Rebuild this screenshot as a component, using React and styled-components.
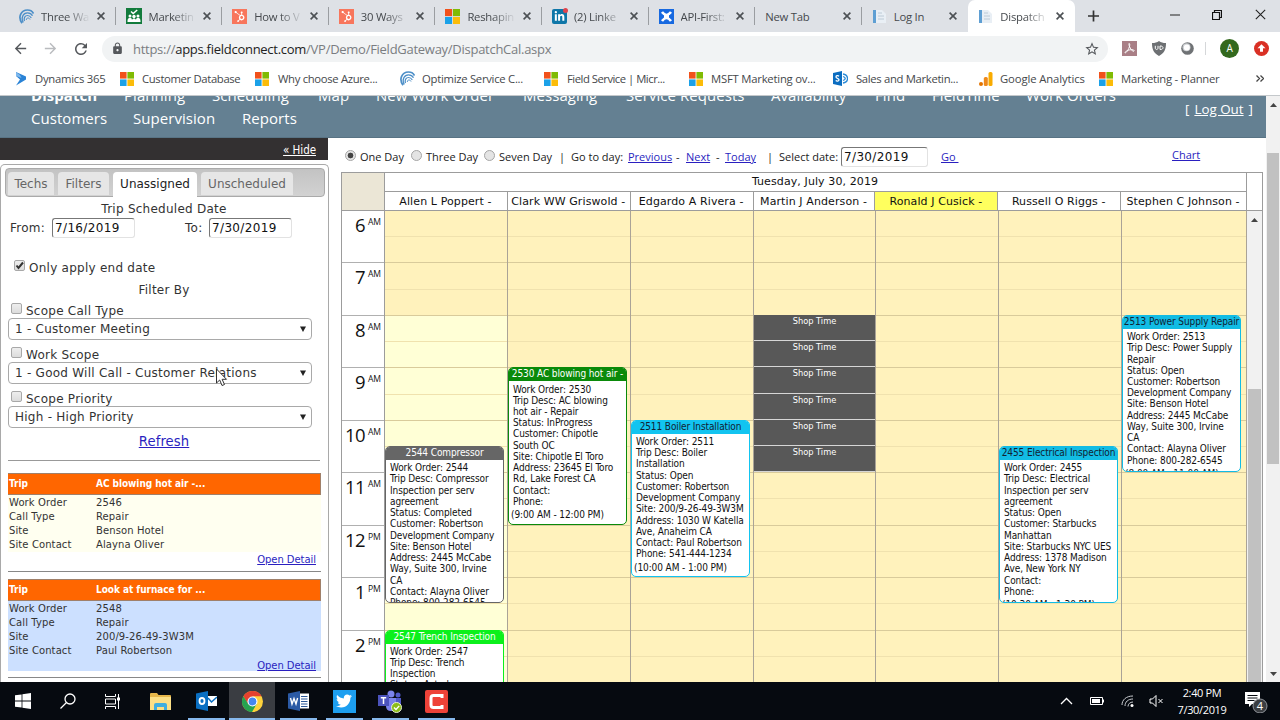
import styled, { createGlobalStyle } from "styled-components";
import { FaHubspot, FaLinkedinIn, FaTwitter } from "react-icons/fa";
import {
  MdArrowBack,
  MdArrowForward,
  MdLock,
  MdRefresh,
  MdStarBorder,
} from "react-icons/md";

const segoe = `"Open Sans", "Noto Sans", sans-serif`;
const verdana = `"DejaVu Sans", sans-serif`;
const tahoma = `"DejaVu Sans Condensed", "DejaVu Sans", sans-serif`;

const HOUR = 52.45;
const FIRST_HOUR = 6;

const GlobalStyle = createGlobalStyle`
  * {
    box-sizing: border-box;
  }
  body {
    margin: 0;
    overflow: hidden;
    background: #fff;
  }
  a {
    color: #2a1fc0;
    text-decoration: underline;
  }
  svg {
    display: block;
    flex: none;
  }
`;

const Screen = styled.div`
  position: relative;
  display: flex;
  flex-direction: column;
  width: 1280px;
  height: 720px;
  overflow: hidden;
  font-family: ${segoe};
  color: #222;
  white-space: nowrap;
`;

/* ---------- browser ---------- */

const TabStrip = styled.div`
  display: flex;
  height: 32px;
  flex: none;
  padding-left: 9px;
  background: #dee1e6;
`;

const BrowserTab = styled.div`
  display: flex;
  align-items: center;
  width: 106.6px;
  padding-left: 10px;
  font-size: 11.3px;
  letter-spacing: -0.25px;
  color: #45494d;
  border-radius: 7px 7px 0 0;
  background: ${(p) => (p.$active ? "#fff" : "transparent")};
  & > svg {
    margin-right: 7px;
  }
`;

const TabTitle = styled.span`
  flex: 1;
  margin-right: 6px;
  mask-image: ${(p) =>
    p.$fade ? "linear-gradient(90deg, #000 50%, transparent 98%)" : "none"};
`;

const TabClose = styled.span`
  display: flex;
  align-items: center;
  width: 19px;
  height: 18px;
  border-right: 1px solid ${(p) => (p.$line ? "#9a9da1" : "transparent")};
`;

const NewTabButton = styled.svg`
  margin: 4px 0 0 13px;
`;

const WindowButtons = styled.div`
  display: flex;
  flex: 1;
  align-items: center;
  justify-content: space-between;
  padding: 0 14px 3px 71px;
`;

const AddressRow = styled.div`
  display: flex;
  align-items: center;
  height: 33px;
  flex: none;
  padding: 0 11px 0 12px;
  color: #55585c;
`;

const NavIcons = styled.div`
  display: flex;
  align-items: center;
  gap: 13px;
  width: 90px;
  & > svg:nth-child(2) {
    color: #b9bbbe;
  }
`;

const UrlBar = styled.div`
  display: flex;
  align-items: center;
  width: 1006px;
  height: 26px;
  padding: 0 8px 0 9px;
  border-radius: 13px;
  background: #f1f3f4;
`;

const Url = styled.span`
  flex: 1;
  margin-left: 9px;
  font-size: 13px;
  letter-spacing: -0.27px;
  color: #7a7d81;
  & b {
    font-weight: 400;
    color: #222;
  }
`;

const Extensions = styled.div`
  display: flex;
  flex: 1;
  align-items: center;
  justify-content: space-between;
  margin-left: 14px;
`;

const BookmarkBar = styled.div`
  display: flex;
  align-items: center;
  height: 31px;
  flex: none;
  padding: 0 0 3px 14px;
  border-bottom: 1px solid #c4c8cb;
`;

const Bookmark = styled.div`
  display: flex;
  align-items: center;
  width: ${(p) => p.$w}px;
  gap: ${(p) => p.$gap || 8}px;
  font-size: 11.3px;
  letter-spacing: ${(p) => p.$ls || 0}px;
  color: #45484b;
`;

/* ---------- site header ---------- */

const Viewport = styled.div`
  display: flex;
  height: 586px;
  flex: none;
`;

const Page = styled.div`
  width: 1266px;
`;

const SiteHeader = styled.div`
  display: flex;
  height: 42px;
  overflow: hidden;
  padding-left: 31px;
  background: #648092;
  border-bottom: 1px solid #587384;
  color: #fff;
`;

const SiteNav = styled.nav`
  width: 1154px;
  margin-top: -12px;
  font-size: 15px;
  letter-spacing: 0.05px;
  line-height: 23px;
`;

const NavRow = styled.div`
  display: flex;
`;

const NavItem = styled.span`
  width: ${(p) => p.$w}px;
  font-weight: ${(p) => (p.$current ? 700 : 400)};
`;

const LogOut = styled.div`
  display: flex;
  gap: 5px;
  margin-top: 4px;
  font-size: 13.4px;
  line-height: 18px;
  & a {
    color: #fff;
  }
`;

const Content = styled.div`
  display: flex;
  height: 544px;
`;

/* ---------- left panel ---------- */

const Sidebar = styled.aside`
  display: flex;
  flex-direction: column;
  width: 329px;
  font-family: ${verdana};
  font-size: 12px;
  letter-spacing: 0.25px;
  color: #333;
`;

const HideBar = styled.div`
  height: 22px;
  flex: none;
  width: 328px;
  padding-right: 12px;
  background: #333031;
  font-family: ${tahoma};
  font-size: 11.5px;
  letter-spacing: -0.05px;
  line-height: 24px;
  text-align: right;
  & a {
    color: #fff;
  }
`;

const Panel = styled.div`
  flex: 1;
  margin-top: 4px;
  padding: 3px 3px 0 4px;
  border: 1px solid #a9a9a9;
  border-bottom: 0;
  border-radius: 5px 5px 0 0;
  overflow: hidden;
`;

const PanelTabs = styled.div`
  display: flex;
  align-items: flex-end;
  gap: 4px;
  height: 29px;
  padding-left: 2px;
  border: 1px solid #aaa;
  border-radius: 4px;
  background: linear-gradient(#c3c3c3, #d2d2d2);
  letter-spacing: 0;
`;

const PanelTab = styled.div`
  width: ${(p) => p.$w}px;
  height: ${(p) => (p.$active ? 25 : 23)}px;
  margin-bottom: ${(p) => (p.$active ? -1 : 1)}px;
  border-radius: 4px 4px 0 0;
  background: ${(p) => (p.$active ? "#fff" : "#e6e6e6")};
  color: ${(p) => (p.$active ? "#222" : "#666")};
  line-height: 24px;
  text-align: center;
`;

const PanelHeading = styled.div`
  height: ${(p) => p.$h}px;
  padding-right: 2px;
  line-height: 24px;
  text-align: center;
`;

const DateRow = styled.div`
  display: flex;
  align-items: center;
  height: 20px;
  padding-left: 5px;
`;

const DateLabel = styled.span`
  width: ${(p) => p.$w}px;
  margin-left: ${(p) => p.$left || 0}px;
`;

const DateInput = styled.span`
  width: ${(p) => p.$w || 83}px;
  height: 20px;
  padding-left: 2px;
  border: 1px solid #e2e2e2;
  border-top: 1px solid #777;
  border-left: 1px solid #777;
  border-radius: 3px;
  background: #fff;
  font-family: ${verdana};
  font-size: 12px;
  letter-spacing: 0.35px;
  line-height: 18px;
  color: #111;
`;

const CheckRow = styled.div`
  display: flex;
  gap: 4px;
  height: ${(p) => p.$h || 15}px;
  margin-top: ${(p) => p.$top || 0}px;
  padding-left: ${(p) => p.$left || 6}px;
  line-height: 16px;
`;

const Box = styled.span`
  width: 11px;
  height: 11px;
  border: 1px solid #a8a8a8;
  border-radius: 2px;
  background: linear-gradient(#eee, #dcdcdc);
`;

const Select = styled.div`
  display: flex;
  align-items: center;
  justify-content: space-between;
  width: 304px;
  height: 22px;
  margin: 0 0 7px 3px;
  padding: 0 5px 0 6px;
  border: 1px solid #a9a9a9;
  border-radius: 4px;
`;

const RefreshRow = styled.div`
  height: 32px;
  margin: -6px 5px 0 3px;
  border-bottom: 1px solid #999;
  font-size: 13.2px;
  letter-spacing: 0.1px;
  line-height: 26px;
  text-align: center;
`;

const Trip = styled.div`
  margin: ${(p) => (p.$first ? 12 : 7)}px 4px 0 3px;
  border-bottom: 1px solid #888;
  font-size: 10px;
  letter-spacing: 0.1px;
`;

const TripHeader = styled.div`
  display: grid;
  grid-template-columns: 87px 1fr;
  height: 22px;
  padding-left: 1px;
  border: 1px solid #a0806a;
  border-left: 0;
  background: #ff6600;
  color: #fff;
  font-family: ${tahoma};
  font-weight: 700;
  font-size: 10px;
  line-height: 20px;
  letter-spacing: -0.05px;
`;

const TripBody = styled.dl`
  display: grid;
  grid-template-columns: 87px 1fr;
  grid-auto-rows: 14px;
  margin: 0;
  padding: 1px 0 0 1px;
  background: ${(p) => p.$bg};
  line-height: 14px;
  & dd {
    margin: 0;
  }
`;

const TripFooter = styled.div`
  height: 13px;
  margin-bottom: 6px;
  padding-right: 5px;
  background: ${(p) => p.$bg};
  letter-spacing: -0.05px;
  line-height: 15px;
  text-align: right;
`;

/* ---------- dispatch calendar ---------- */

const Dispatch = styled.main`
  width: 937px;
  padding-left: 12px;
`;

const DayToolbar = styled.div`
  display: flex;
  align-items: center;
  height: 34px;
  padding: 3px 0 0 4px;
  font-size: 11px;
`;

const ToolItem = styled.span`
  width: ${(p) => p.$w}px;
  margin-left: ${(p) => p.$left || 0}px;
  padding-bottom: ${(p) => p.$raise || 0}px;
`;

const Radio = styled.span`
  width: 11px;
  height: 11px;
  margin: 0 4px 3px 0;
  border: 1px solid #a5a5a5;
  border-radius: 50%;
  background: ${(p) =>
    p.$on ? "radial-gradient(#444 0 2.6px, #e6e6e6 3.2px)" : "#e4e4e4"};
`;

const Calendar = styled.div`
  width: 922px;
  border: 1px solid #9c9c9c;
  border-bottom: 0;
`;

const CalendarHead = styled.div`
  display: flex;
  height: 38px;
  border-bottom: 1px solid #9c9c9c;
  font-family: ${verdana};
  font-size: 11px;
  letter-spacing: 0.1px;
  color: #111;
`;

const Corner = styled.div`
  width: 43px;
  background: #ebe6d6;
  border-right: 1px solid #9c9c9c;
`;

const HeadRows = styled.div`
  width: 862px;
  border-right: 1px solid #9c9c9c;
`;

const DateHead = styled.div`
  height: 19px;
  padding-right: 1px;
  border-bottom: 1px solid #9c9c9c;
  line-height: 18px;
  text-align: center;
`;

const TechNames = styled.div`
  display: flex;
`;

const TechName = styled.div`
  width: ${(p) => p.$w}px;
  height: 18px;
  padding-right: 1px;
  border-right: 1px solid #9c9c9c;
  background: ${(p) => (p.$marked ? "#ffff5e" : "#fff")};
  line-height: 19px;
  text-align: center;
  &:last-child {
    border-right: 0;
  }
`;

const CalendarBody = styled.div`
  display: flex;
  height: 471px;
  overflow: hidden;
`;

const Hours = styled.div`
  width: 43px;
  border-right: 1px solid #9c9c9c;
`;

const HourCell = styled.div`
  display: flex;
  justify-content: flex-end;
  height: ${HOUR}px;
  padding: 1px 2px 0 0;
  border-bottom: 1px solid #b0b0b0;
  font-size: 18.5px;
  letter-spacing: -0.6px;
  line-height: 25px;
  color: #111;
  & sup {
    width: 14px;
    margin-left: 3px;
    font-size: 8.6px;
    letter-spacing: -0.2px;
    line-height: 20px;
  }
`;

const TechColumn = styled.div`
  position: relative;
  width: ${(p) => p.$w}px;
  height: 471px;
  border-right: 1px solid #aaa397;
  background: repeating-linear-gradient(
      transparent 0 ${HOUR / 2 - 1}px,
      #f0e2ae ${HOUR / 2 - 1}px ${HOUR / 2}px,
      transparent ${HOUR / 2}px ${HOUR - 1}px,
      #d9cb9b ${HOUR - 1}px ${HOUR}px
    ),
    ${(p) =>
      p.$open
        ? `linear-gradient(#fff2bc ${HOUR * 2}px, #ffffd6 ${HOUR * 2}px)`
        : "#fff2bc"};
  &:last-of-type {
    border-right: 0;
  }
`;

const ShopBlock = styled.div`
  position: absolute;
  left: 0;
  right: 0;
  height: ${HOUR / 2}px;
  background: #585858;
  border-bottom: 1px solid #d6d6d6;
  color: #fff;
  font-family: ${tahoma};
  font-size: 9.2px;
  line-height: 12px;
  text-align: center;
`;

const Event = styled.div`
  position: absolute;
  left: 0;
  width: 119px;
  overflow: hidden;
  border: 1px solid ${(p) => p.$color};
  border-radius: 5px;
  background: #fff;
  font-family: ${tahoma};
  font-size: 10px;
  letter-spacing: -0.1px;
  color: #111;
`;

const EventTitle = styled.div`
  height: 13px;
  background: ${(p) => p.$color};
  color: ${(p) => (p.$dark ? "#123" : "#fff")};
  font-size: 10px;
  letter-spacing: -0.11px;
  line-height: 12px;
  text-align: center;
`;

const EventLines = styled.div`
  padding: 2.2px 0 0 4px;
  line-height: 11.23px;
`;

const EventTime = styled.div`
  margin-top: 2px;
  padding-left: 2px;
  line-height: 11px;
`;

const InnerScroll = styled.div`
  display: flex;
  flex-direction: column;
  align-items: center;
  width: 15px;
  padding: 7px 1px 0;
  background: #f1f1f1;
  &::after {
    content: "";
    width: 13px;
    flex: 1;
    margin-top: 167px;
    background: #c1c1c1;
  }
`;

const PageScroll = styled.div`
  display: flex;
  flex-direction: column;
  justify-content: space-between;
  align-items: center;
  width: 14px;
  padding: 7px 0 6px;
  background: #f1f1f1;
`;

const PageThumb = styled.div`
  width: 12px;
  height: 311px;
  margin-bottom: 163px;
  background: #c1c1c1;
`;

/* ---------- taskbar ---------- */

const Taskbar = styled.footer`
  display: flex;
  height: 38px;
  flex: none;
  background: #060a10;
  color: #fff;
`;

const TaskSlot = styled.div`
  display: flex;
  align-items: center;
  justify-content: center;
  width: ${(p) => p.$w || 46}px;
  margin-left: ${(p) => p.$left || 0}px;
  background: ${(p) => (p.$active ? "#3a3d42" : "transparent")};
  box-shadow: ${(p) => (p.$active ? "inset 0 -2px #86b8ec" : "none")};
`;

const OpenSlot = styled(TaskSlot)`
  background: linear-gradient(#86b8ec, #86b8ec) 5px 100% / 37px 2px no-repeat;
`;

const Tray = styled.div`
  display: flex;
  align-items: center;
  margin-left: auto;
  padding-right: 12px;
`;

const Clock = styled.div`
  width: 62px;
  margin: 0 11px 0 7px;
  font-size: 11px;
  letter-spacing: -0.35px;
  line-height: 17px;
  text-align: center;
`;

const Cursor = styled.svg`
  position: absolute;
  left: 215px;
  top: 368px;
`;

/* ---------- icons ---------- */

const WindowsLogo = ({ size = 14 }) => (
  <svg width={size} height={size} viewBox="0 0 14 14">
    <path fill="#f1511b" d="M0 0h6.6v6.6H0z" />
    <path fill="#80bb03" d="M7.4 0H14v6.6H7.4z" />
    <path fill="#1ba1e8" d="M0 7.4h6.6V14H0z" />
    <path fill="#fbbc09" d="M7.4 7.4H14V14H7.4z" />
  </svg>
);

const Ripple = () => (
  <svg width="15" height="15" viewBox="0 0 15 15" fill="none" stroke="#4d8fc8">
    <path d="M3 14.300C-1.500 8 2 1 8.500 1c3 0 5 1.500 6 3.500" strokeWidth="1.700" />
    <path d="M4.200 13.500C1.500 8.500 4.500 3.800 8.500 3.800c2.500 0 4 1.200 5 3" strokeWidth="1.300" />
    <path d="M5.500 12C4.500 9 6 6.500 8.500 6.500c1.800 0 3 1 3.800 2.500" strokeWidth="1.200" />
    <path d="M7.500 11C7 9.800 8 9 9 9s1.500.6 2 1.500" />
  </svg>
);

const MarketingIcon = () => (
  <svg width="16" height="16" viewBox="0 0 16 16" fill="#fff">
    <path fill="#127b3c" d="M0 0h16v16H0z" />
    <path d="m5 3.500 2.200 2 4-3.500" fill="none" stroke="#fff" strokeWidth="1.500" />
    <circle cx="4" cy="8" r="1.500" />
    <circle cx="8" cy="8.500" r="1.700" />
    <circle cx="12" cy="8" r="1.500" />
    <path d="M1.500 13c0-4 4.500-4 4.500-1 .5-2 3.500-2 4 0 0-3 4.500-3 4.500 1v1h-13z" />
  </svg>
);

const Tile = styled.span`
  position: relative;
  display: flex;
  align-items: center;
  justify-content: center;
  width: ${(p) => p.$size || 15}px;
  height: ${(p) => p.$size || 15}px;
  flex: none;
  margin-right: ${(p) => p.$gap ?? 7}px;
  border-radius: ${(p) => p.$round || 0}px;
  background: ${(p) => p.$bg};
  color: #fff;
`;

const RedDot = styled.i`
  position: absolute;
  top: -1px;
  right: -1px;
  width: 5px;
  height: 5px;
  border-radius: 50%;
  background: #e0444c;
`;

const HubspotTile = () => (
  <Tile $bg="#f8765c">
    <FaHubspot size={11} />
  </Tile>
);

const LinkedinTile = () => (
  <Tile $bg="#0e76a8" $round={2}>
    <FaLinkedinIn size={11} />
    <RedDot />
  </Tile>
);

const CrossIcon = () => (
  <svg width="15" height="15" viewBox="0 0 15 15">
    <path fill="#1769e0" d="M0 0h15v15H0z" />
    <path
      d="M3 3c1.500 2 3 3 4.500 3S10.500 5 12 3M3 12c1.500-2 3-3 4.500-3s3 1 4.500 3"
      fill="none"
      stroke="#fff"
      strokeWidth="2.600"
    />
    <path fill="#fff" d="M5 5h5v5H5z" />
  </svg>
);

const PageIcon = () => (
  <svg width="15" height="15" viewBox="0 0 15 15">
    <path fill="#e9eff5" d="M1 1h9l4 4v9H1z" />
    <path fill="#5f9fd3" d="M1 1h3v13H1z" />
    <path d="M6 4h4M6 7h6M6 10h6" stroke="#bccad6" />
  </svg>
);

const CloseX = ({ size = 8, color = "#4c5054", width = 1.6 }) => (
  <svg width={size} height={size} viewBox="0 0 8 8" fill="none">
    <path d="m.6.6 6.800 6.800M7.400.6.6 7.400" stroke={color} strokeWidth={width} />
  </svg>
);

const DynamicsIcon = () => (
  <svg width="13" height="15" viewBox="0 0 13 15">
    <path fill="#2a83d6" d="m2 1 10 4.500v3L2 14.500l4-6L2 5z" />
    <path fill="#7fb8ec" d="m2 1 4 3 1.500 3L2 5z" />
  </svg>
);

const SharepointIcon = () => (
  <svg width="15" height="15" viewBox="0 0 15 15">
    <path fill="#0a6cc0" d="m0 2 9-2v15l-9-2z" />
    <path
      d="M6 5.200C5 4.300 3 4.500 3 5.900c0 1.600 3 1.200 3 2.900 0 1.500-2.200 1.600-3.300.7"
      fill="none"
      stroke="#fff"
      strokeWidth="1.300"
    />
    <path
      d="M10 3c3 .5 4.500 2.500 4.500 4.500S13 11.500 10 12M10 5.500c3 1 3 3 0 4"
      fill="none"
      stroke="#2a8ad6"
      strokeWidth="1.300"
    />
  </svg>
);

const AnalyticsIcon = () => (
  <svg width="14" height="14" viewBox="0 0 14 14">
    <rect x="9.500" y="0" width="4" height="14" rx="1.500" fill="#f9ab00" />
    <rect x="4.800" y="5" width="4" height="9" rx="1.500" fill="#ee8a1d" />
    <circle cx="2" cy="12" r="2" fill="#e37400" />
  </svg>
);

const AcrobatIcon = () => (
  <svg width="15" height="15" viewBox="0 0 15 15" fill="none" stroke="#fff">
    <path fill="#a97f86" stroke="none" d="M0 0h15v15H0z" />
    <path d="M7 2.500c1.500 0 .5 4-1 6.500S3 12.500 3 11.500 7 8.500 10 8.700s2.500 2 1 1.500S6.500 5 7 2.500z" />
  </svg>
);

const ShieldIcon = () => (
  <svg width="14" height="15" viewBox="0 0 14 15">
    <path fill="#6d7073" d="M7 0c2 1.500 4 2 7 2 0 6-1.500 10-7 13C1.500 12 0 8 0 2c3 0 5-.5 7-2z" />
    <path
      d="M3.300 4.800V7c0 2 2.700 2 2.700 0V4.800M8 5v3.500c4 .3 4-3.800 0-3.500z"
      fill="none"
      stroke="#fff"
    />
  </svg>
);

const GlobeIcon = () => (
  <svg width="13" height="13" viewBox="0 0 13 13">
    <circle cx="6.500" cy="6.500" r="6.300" fill="#6f7275" />
    <circle cx="5.500" cy="5.300" r="4" fill="#c9cccf" />
    <circle cx="5.800" cy="5.600" r="3" fill="#fff" />
  </svg>
);

const AlertIcon = () => (
  <svg width="15" height="15" viewBox="0 0 15 15">
    <circle cx="7.500" cy="7.500" r="7.500" fill="#d93025" />
    <path fill="#fff" d="m7.500 3.200 4 4H9v3.600H6V7.200H3.500z" />
  </svg>
);

const Avatar = styled.span`
  width: 19px;
  height: 19px;
  border-radius: 50%;
  background: #33691e;
  color: #fff;
  font-size: 10px;
  line-height: 19px;
  text-align: center;
`;

const ToolbarRule = styled.span`
  width: 1px;
  height: 13px;
  margin: 0 -1px 0 -3px;
  background: #d5d7d9;
`;

const Arrow = ({ down }) => (
  <svg width="7" height="4" viewBox="0 0 7 4">
    <path fill="#444" d={down ? "M0 0h7L3.500 4z" : "M0 4h7L3.500 0z"} />
  </svg>
);

const SelectArrow = () => (
  <svg width="6" height="6" viewBox="0 0 6 6">
    <path fill="#222" d="M0 .5h6L3 6z" />
  </svg>
);

const StartIcon = () => (
  <svg width="16" height="16" viewBox="0 0 16 16" fill="#fff">
    <path d="m0 2.300 6.600-.9v6.200H0zM7.400 1.300 16 0v7.600H7.400zM0 8.400h6.600v6.200L0 13.700zM7.400 8.400H16V16l-8.600-1.300z" />
  </svg>
);

const SearchIcon = () => (
  <svg width="16" height="16" viewBox="0 0 16 16" fill="none" stroke="#fff" strokeWidth="1.300">
    <circle cx="10" cy="6" r="5" />
    <path d="M6.500 9.500.5 15.500" />
  </svg>
);

const TaskViewIcon = () => (
  <svg width="16" height="15" viewBox="0 0 16 15" fill="none" stroke="#fff">
    <path d="M.5 0v2.500h10V0M.5 5h10v5H.5zM.5 15v-2.500h10V15M13.500 0v15" />
    <path fill="#fff" stroke="none" d="M12 3.500h3v3h-3z" />
  </svg>
);

const FolderIcon = () => (
  <svg width="21" height="17" viewBox="0 0 21 17">
    <path fill="#e5b64a" d="M0 1q0-1 1-1h6l1.500 2H20q1 0 1 1v14H0z" />
    <path fill="#fbdf86" d="M0 4h21v13H0z" />
    <path fill="#3eaee0" d="M4 17v-5q0-2 2-2h9q2 0 2 2v5h-3v-3H7v3z" />
  </svg>
);

const OutlookIcon = () => (
  <svg width="21" height="20" viewBox="0 0 21 20">
    <path fill="#0a6fc2" d="m0 2.500 12-2.500v20L0 17.500z" />
    <path fill="#fff" d="M12 5h9v10h-9z" />
    <path d="m12 7 3.500 4L21 6" fill="none" stroke="#0a6fc2" strokeWidth="1.500" />
    <ellipse cx="6" cy="10" rx="2.500" ry="3" fill="none" stroke="#fff" strokeWidth="1.800" />
  </svg>
);

const ChromeIcon = () => (
  <svg width="21" height="21" viewBox="0 0 21 21">
    <circle cx="10.500" cy="10.500" r="10.500" fill="#fdd23c" />
    <path fill="#e5412f" d="M1.400 5.200A10.500 10.500 0 0 1 19.600 5.300H10.500v5.200L6 13z" />
    <path fill="#26a350" d="M1.400 5.200A10.500 10.500 0 0 0 10 21l5-8.500-4.500 2-4.500-2z" />
    <circle cx="10.500" cy="10.500" r="5" fill="#fff" />
    <circle cx="10.500" cy="10.500" r="3.900" fill="#4587f0" />
  </svg>
);

const WordIcon = () => (
  <svg width="21" height="20" viewBox="0 0 21 20">
    <path fill="#fff" d="M11 2.500h10v15H11z" />
    <path d="M13 5.500h6.500M13 8h6.500M13 10.500h6.500M13 13h6.500M13 15.500h6.500" stroke="#2b5797" />
    <path fill="#2b5aa5" d="m0 2.500 12-2.500v20L0 17.500z" />
    <path d="m2.500 7 1.500 6 2-5.500L8 13l1.600-6" fill="none" stroke="#fff" strokeWidth="1.400" />
  </svg>
);

const TeamsIcon = () => (
  <svg width="24" height="23" viewBox="0 0 24 23">
    <circle cx="13" cy="4" r="3.500" fill="#7b83eb" />
    <circle cx="20" cy="5" r="2.500" fill="#5059c9" />
    <path fill="#5059c9" d="M14 8h9v7q0 3-4 3h-5z" />
    <path fill="#7b83eb" d="M8 8h10v7q0 6-5 6t-5-5z" />
    <path fill="#4b53bc" d="M0 5h11v11H0z" />
    <path d="M2.800 7.800h5.400M5.500 8v6" stroke="#fff" strokeWidth="1.500" />
    <circle cx="18.500" cy="17.500" r="5" fill="#8cbd18" stroke="#e8f0d8" />
    <path d="m16 17.500 2 2 3.200-3.600" fill="none" stroke="#fff" strokeWidth="1.400" />
  </svg>
);

const CamtasiaIcon = () => (
  <svg width="23" height="23" viewBox="0 0 23 23">
    <rect width="23" height="23" rx="2" fill="#ee4238" />
    <path
      d="M17 8V5.500H8.500Q6 5.500 6 8v7q0 2.500 2.500 2.500H17V15"
      fill="none"
      stroke="#fff"
      strokeWidth="3"
    />
  </svg>
);

const TrayIcons = () => (
  <svg width="104" height="24" viewBox="0 0 104 24" fill="none" stroke="#fff">
    <path d="m1 15 5.500-5.500L12 15" strokeWidth="1.300" />
    <path d="M30.500 8.500h12v7h-12zM43.500 10.500v3" />
    <path fill="#fff" stroke="none" d="M32 10h8v4h-8z" />
    <path
      d="M62 16C62 11 66 7 73 7M65 17c0-4 3-7 8-7M68 17.500c0-2.500 2-4.500 5-4.500"
      stroke="#c9ccd0"
    />
    <circle cx="72" cy="16.500" r="1.500" fill="#fff" stroke="none" />
    <path d="M90 10h2.500l3.500-3.500v11L92.500 14H90zM98.500 10l4 4M102.500 10l-4 4" />
  </svg>
);

const NoticeIcon = () => (
  <svg width="24" height="24" viewBox="0 0 24 24">
    <path fill="#fff" d="M1 3h15v12H8l-3 3v-3H1z" />
    <path d="M3.500 6.500h10M3.500 9h10M3.500 11.500h7" stroke="#060a10" />
    <circle cx="16" cy="17" r="7" fill="#3b3e42" stroke="#90949a" />
    <text x="16" y="21" fill="#fff" fontSize="11" textAnchor="middle">
      4
    </text>
  </svg>
);

/* ---------- data ---------- */

const browserTabs = [
  { title: "Three Wa", icon: <Ripple />, fade: true },
  { title: "Marketin", icon: <MarketingIcon />, fade: true },
  { title: "How to V", icon: <HubspotTile />, fade: true },
  { title: "30 Ways", icon: <HubspotTile />, fade: true },
  { title: "Reshapin", icon: <WindowsLogo size={15} />, fade: true },
  { title: "(2) Linke", icon: <LinkedinTile />, fade: true },
  { title: "API-First:", icon: <CrossIcon />, fade: true },
  { title: "New Tab" },
  { title: "Log In", icon: <PageIcon /> },
  { title: "Dispatch", icon: <PageIcon />, fade: true, active: true },
];

const bookmarks = [
  { label: "Dynamics 365", icon: <DynamicsIcon />, w: 106, ls: -0.25 },
  { label: "Customer Database", icon: <WindowsLogo />, w: 135, ls: -0.35 },
  { label: "Why choose Azure...", icon: <WindowsLogo />, w: 145, gap: 9, ls: -0.33 },
  { label: "Optimize Service C...", icon: <Ripple />, w: 144, gap: 7, ls: -0.28 },
  { label: "Field Service | Micr...", icon: <WindowsLogo />, w: 145, gap: 9, ls: -0.5 },
  { label: "MSFT Marketing ov...", icon: <WindowsLogo />, w: 144, gap: 8, ls: -0.22 },
  { label: "Sales and Marketin...", icon: <SharepointIcon />, w: 146, ls: -0.33 },
  { label: "Google Analytics", icon: <AnalyticsIcon />, w: 120, gap: 7, ls: -0.12 },
  { label: "Marketing - Planner", icon: <WindowsLogo />, w: 157, ls: -0.27 },
];

const navTop = [
  ["Dispatch", 93],
  ["Planning", 88],
  ["Scheduling", 106],
  ["Map", 58],
  ["New Work Order", 147],
  ["Messaging", 103],
  ["Service Requests", 145],
  ["Availability", 104],
  ["Find", 57],
  ["FieldTime", 94],
  ["Work Orders", 92],
];

const navBottom = [
  ["Customers", 102],
  ["Supervision", 109],
  ["Reports", 60],
];

const filters = [
  ["Scope Call Type", "1 - Customer Meeting"],
  ["Work Scope", "1 - Good Will Call - Customer Relations"],
  ["Scope Priority", "High - High Priority"],
];

const trips = [
  {
    title: "AC blowing hot air -...",
    order: "2546",
    type: "Repair",
    site: "Benson Hotel",
    contact: "Alayna Oliver",
    bg: "#fffff0",
    footerBg: "#fff",
  },
  {
    title: "Look at furnace for ...",
    order: "2548",
    type: "Repair",
    site: "200/9-26-49-3W3M",
    contact: "Paul Robertson",
    bg: "#cce0ff",
    footerBg: "#cce0ff",
  },
];

const techs = [
  {
    name: "Allen L Poppert -",
    w: 123,
    open: true,
    events: [
      {
        title: "2544 Compressor",
        start: 10.5,
        color: "#666",
        lines: [
          "Work Order: 2544",
          "Trip Desc: Compressor",
          "Inspection per serv",
          "agreement",
          "Status: Completed",
          "Customer: Robertson",
          "Development Company",
          "Site: Benson Hotel",
          "Address: 2445 McCabe",
          "Way, Suite 300, Irvine",
          "CA",
          "Contact: Alayna Oliver",
          "Phone: 800-282-6545",
        ],
      },
      {
        title: "2547 Trench Inspection",
        start: 14,
        color: "#0cf01c",
        lines: [
          "Work Order: 2547",
          "Trip Desc: Trench",
          "Inspection",
          "Status: Acted",
        ],
      },
    ],
  },
  {
    name: "Clark WW Griswold -",
    w: 123,
    events: [
      {
        title: "2530 AC blowing hot air -",
        start: 9,
        color: "#0a8a0a",
        lines: [
          "Work Order: 2530",
          "Trip Desc: AC blowing",
          "hot air - Repair",
          "Status: InProgress",
          "Customer: Chipotle",
          "South OC",
          "Site: Chipotle El Toro",
          "Address: 23645 El Toro",
          "Rd, Lake Forest CA",
          "Contact:",
          "Phone:",
        ],
        time: "(9:00 AM - 12:00 PM)",
      },
    ],
  },
  {
    name: "Edgardo A Rivera -",
    w: 123,
    events: [
      {
        title: "2511 Boiler Installation",
        start: 10,
        color: "#12c4f0",
        dark: true,
        lines: [
          "Work Order: 2511",
          "Trip Desc: Boiler",
          "Installation",
          "Status: Open",
          "Customer: Robertson",
          "Development Company",
          "Site: 200/9-26-49-3W3M",
          "Address: 1030 W Katella",
          "Ave, Anaheim CA",
          "Contact: Paul Robertson",
          "Phone: 541-444-1234",
        ],
        time: "(10:00 AM - 1:00 PM)",
      },
    ],
  },
  { name: "Martin J Anderson -", w: 122, shop: [8, 8.5, 9, 9.5, 10, 10.5] },
  { name: "Ronald J Cusick -", w: 123, marked: true },
  {
    name: "Russell O Riggs -",
    w: 123,
    events: [
      {
        title: "2455 Electrical Inspection",
        start: 10.5,
        color: "#12bce4",
        dark: true,
        lines: [
          "Work Order: 2455",
          "Trip Desc: Electrical",
          "Inspection per serv",
          "agreement",
          "Status: Open",
          "Customer: Starbucks",
          "Manhattan",
          "Site: Starbucks NYC UES",
          "Address: 1378 Madison",
          "Ave, New York NY",
          "Contact:",
          "Phone:",
        ],
        time: "(10:30 AM - 1:30 PM)",
      },
    ],
  },
  {
    name: "Stephen C Johnson -",
    w: 125,
    events: [
      {
        title: "2513 Power Supply Repair",
        start: 8,
        color: "#12bce4",
        dark: true,
        lines: [
          "Work Order: 2513",
          "Trip Desc: Power Supply",
          "Repair",
          "Status: Open",
          "Customer: Robertson",
          "Development Company",
          "Site: Benson Hotel",
          "Address: 2445 McCabe",
          "Way, Suite 300, Irvine",
          "CA",
          "Contact: Alayna Oliver",
          "Phone: 800-282-6545",
        ],
        time: "(8:00 AM - 11:00 AM)",
      },
    ],
  },
];

const hours = [
  ["6", "AM"],
  ["7", "AM"],
  ["8", "AM"],
  ["9", "AM"],
  ["10", "AM"],
  ["11", "AM"],
  ["12", "PM"],
  ["1", "PM"],
  ["2", "PM"],
];

const offsetFor = (hour) => (hour - FIRST_HOUR) * HOUR - 1;

/* ---------- sections ---------- */

const Browser = () => (
  <>
    <TabStrip>
      {browserTabs.map((tab, i) => (
        <BrowserTab key={i} $active={tab.active}>
          {tab.icon}
          <TabTitle $fade={tab.fade}>{tab.title}</TabTitle>
          <TabClose $line={i < 8}>
            <CloseX />
          </TabClose>
        </BrowserTab>
      ))}
      <NewTabButton width="11" height="24" viewBox="0 0 11 24">
        <path d="M5.500 6.500v11M0 12h11" stroke="#333" strokeWidth="1.700" />
      </NewTabButton>
      <WindowButtons>
        <svg width="10" height="2" viewBox="0 0 10 2">
          <path d="M0 1h10" stroke="#222" />
        </svg>
        <svg width="10" height="10" viewBox="0 0 10 10" fill="none">
          <path d="M.5 2.500h7v7h-7zM2.500 2V.5h7v7H8" stroke="#111" strokeWidth="1.200" />
        </svg>
        <CloseX size={11} color="#222" width={0.8} />
      </WindowButtons>
    </TabStrip>
    <AddressRow>
      <NavIcons>
        <MdArrowBack size={17} />
        <MdArrowForward size={17} />
        <MdRefresh size={18} />
      </NavIcons>
      <UrlBar>
        <MdLock size={13} />
        <Url>
          https://<b>apps.fieldconnect.com</b>/VP/Demo/FieldGateway/DispatchCal.aspx
        </Url>
        <MdStarBorder size={16} />
      </UrlBar>
      <Extensions>
        <AcrobatIcon />
        <ShieldIcon />
        <GlobeIcon />
        <ToolbarRule />
        <Avatar>A</Avatar>
        <AlertIcon />
      </Extensions>
    </AddressRow>
    <BookmarkBar>
      {bookmarks.map((b) => (
        <Bookmark key={b.label} $w={b.w} $gap={b.gap} $ls={b.ls}>
          {b.icon}
          {b.label}
        </Bookmark>
      ))}
      <svg width="8" height="7" viewBox="0 0 8 7" fill="none" stroke="#444">
        <path d="m.5.500 3 3-3 3M4.500.500l3 3-3 3" strokeWidth="1.300" />
      </svg>
    </BookmarkBar>
  </>
);

const SiteTop = () => (
  <SiteHeader>
    <SiteNav>
      <NavRow>
        {navTop.map(([label, w], i) => (
          <NavItem key={label} $w={w} $current={i === 0}>
            {label}
          </NavItem>
        ))}
      </NavRow>
      <NavRow>
        {navBottom.map(([label, w]) => (
          <NavItem key={label} $w={w}>
            {label}
          </NavItem>
        ))}
      </NavRow>
    </SiteNav>
    <LogOut>
      [ <a>Log Out</a> ]
    </LogOut>
  </SiteHeader>
);

const TripPanel = () => (
  <Sidebar>
    <HideBar>
      <a>« Hide</a>
    </HideBar>
    <Panel>
      <PanelTabs>
        <PanelTab $w={46}>Techs</PanelTab>
        <PanelTab $w={51}>Filters</PanelTab>
        <PanelTab $w={84} $active>
          Unassigned
        </PanelTab>
        <PanelTab $w={92}>Unscheduled</PanelTab>
      </PanelTabs>
      <PanelHeading $h={21}>Trip Scheduled Date</PanelHeading>
      <DateRow>
        <DateLabel $w={42}>From:</DateLabel>
        <DateInput>7/16/2019</DateInput>
        <DateLabel $w={24} $left={50}>
          To:
        </DateLabel>
        <DateInput>7/30/2019</DateInput>
      </DateRow>
      <CheckRow $left={9} $h={18} $top={22}>
        <Box>
          <svg width="9" height="9" viewBox="0 0 9 9" fill="none">
            <path d="m1.500 4.500 2 2.500L8 1.500" stroke="#333" strokeWidth="2" />
          </svg>
        </Box>
        Only apply end date
      </CheckRow>
      <PanelHeading $h={25}>Filter By</PanelHeading>
      {filters.map(([label, value]) => (
        <div key={label}>
          <CheckRow>
            <Box />
            {label}
          </CheckRow>
          <Select>
            <span>{value}</span>
            <SelectArrow />
          </Select>
        </div>
      ))}
      <RefreshRow>
        <a>Refresh</a>
      </RefreshRow>
      {trips.map((trip, i) => (
        <Trip key={trip.order} $first={i === 0}>
          <TripHeader>
            <span>Trip</span>
            <span>{trip.title}</span>
          </TripHeader>
          <TripBody $bg={trip.bg}>
            <dt>Work Order</dt>
            <dd>{trip.order}</dd>
            <dt>Call Type</dt>
            <dd>{trip.type}</dd>
            <dt>Site</dt>
            <dd>{trip.site}</dd>
            <dt>Site Contact</dt>
            <dd>{trip.contact}</dd>
          </TripBody>
          <TripFooter $bg={trip.footerBg}>
            <a>Open Detail</a>
          </TripFooter>
        </Trip>
      ))}
    </Panel>
  </Sidebar>
);

const TechEvent = ({ event }) => (
  <Event
    $color={event.color}
    style={{ top: offsetFor(event.start), height: HOUR * 3 }}
  >
    <EventTitle $color={event.color} $dark={event.dark}>
      {event.title}
    </EventTitle>
    <EventLines>
      {event.lines.map((line) => (
        <div key={line}>{line}</div>
      ))}
    </EventLines>
    {event.time && <EventTime>{event.time}</EventTime>}
  </Event>
);

const DispatchCalendar = () => (
  <Dispatch>
    <DayToolbar>
      <Radio $on />
      <ToolItem $w={51}>One Day</ToolItem>
      <Radio />
      <ToolItem $w={58}>Three Day</ToolItem>
      <Radio />
      <ToolItem $w={60}>Seven Day</ToolItem>
      <ToolItem $w={12}>|</ToolItem>
      <ToolItem $w={57}>Go to day:</ToolItem>
      <ToolItem $w={48}>
        <a>Previous</a>
      </ToolItem>
      <ToolItem $w={10}>-</ToolItem>
      <ToolItem $w={30}>
        <a>Next</a>
      </ToolItem>
      <ToolItem $w={9}>-</ToolItem>
      <ToolItem $w={42}>
        <a>Today</a>
      </ToolItem>
      <ToolItem $w={12}>|</ToolItem>
      <ToolItem $w={62}>Select date:</ToolItem>
      <DateInput $w={87}>7/30/2019</DateInput>
      <ToolItem $w={231} $left={13}>
        <a>Go&nbsp;</a>
      </ToolItem>
      <ToolItem $w={40} $raise={4}>
        <a>Chart</a>
      </ToolItem>
    </DayToolbar>
    <Calendar>
      <CalendarHead>
        <Corner />
        <HeadRows>
          <DateHead>Tuesday, July 30, 2019</DateHead>
          <TechNames>
            {techs.map((t) => (
              <TechName key={t.name} $w={t.w} $marked={t.marked}>
                {t.name}
              </TechName>
            ))}
          </TechNames>
        </HeadRows>
      </CalendarHead>
      <CalendarBody>
        <Hours>
          {hours.map(([hour, half]) => (
            <HourCell key={hour}>
              {hour}
              <sup>{half}</sup>
            </HourCell>
          ))}
        </Hours>
        {techs.map((t) => (
          <TechColumn key={t.name} $w={t.w} $open={t.open}>
            {t.shop?.map((hour) => (
              <ShopBlock key={hour} style={{ top: offsetFor(hour) }}>
                Shop Time
              </ShopBlock>
            ))}
            {t.events?.map((event) => (
              <TechEvent key={event.title} event={event} />
            ))}
          </TechColumn>
        ))}
        <InnerScroll>
          <Arrow />
        </InnerScroll>
      </CalendarBody>
    </Calendar>
  </Dispatch>
);

const WindowsTaskbar = () => (
  <Taskbar>
    <TaskSlot $w={45}>
      <StartIcon />
    </TaskSlot>
    <TaskSlot $w={45}>
      <SearchIcon />
    </TaskSlot>
    <TaskSlot $w={45}>
      <TaskViewIcon />
    </TaskSlot>
    <TaskSlot $left={2}>
      <FolderIcon />
    </TaskSlot>
    <OpenSlot>
      <OutlookIcon />
    </OpenSlot>
    <TaskSlot $active>
      <ChromeIcon />
    </TaskSlot>
    <OpenSlot>
      <WordIcon />
    </OpenSlot>
    <OpenSlot>
      <Tile $bg="#1d9ff0" $size={23} $gap={0}>
        <FaTwitter size={16} />
      </Tile>
    </OpenSlot>
    <OpenSlot>
      <TeamsIcon />
    </OpenSlot>
    <OpenSlot>
      <CamtasiaIcon />
    </OpenSlot>
    <Tray>
      <TrayIcons />
      <Clock>
        <div>2:40 PM</div>
        <div>7/30/2019</div>
      </Clock>
      <NoticeIcon />
    </Tray>
  </Taskbar>
);

const App = () => {
  return (
    <Screen>
      <GlobalStyle />
      <Browser />
      <Viewport>
        <Page>
          <SiteTop />
          <Content>
            <TripPanel />
            <DispatchCalendar />
          </Content>
        </Page>
        <PageScroll>
          <Arrow />
          <PageThumb />
          <Arrow down />
        </PageScroll>
      </Viewport>
      <WindowsTaskbar />
      <Cursor width="13" height="19" viewBox="0 0 13 19">
        <path
          fill="#fff"
          stroke="#333"
          d="M1.500 1v14l3.200-3 2.300 5.500 2.500-1-2.400-5.200h4.400z"
        />
      </Cursor>
    </Screen>
  );
};

export default App;
